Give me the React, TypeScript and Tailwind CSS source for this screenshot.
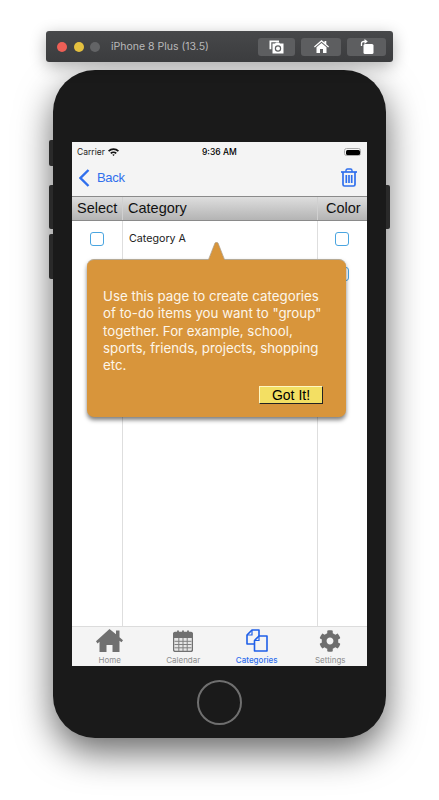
import React from 'react'
import { FaCog } from 'react-icons/fa'

const inter = "font-['Inter','Noto_Sans',sans-serif]"
const arial = "font-['Liberation_Sans',sans-serif]"

const Check: React.FC = () => (
  <div className="w-[14px] h-[14px] rounded-[3px] border-[1.5px] border-[#4aa5e0] bg-white" />
)

const TitleButton: React.FC<{ width: string; children: React.ReactNode }> = ({ width, children }) => (
  <div className={`${width} h-[18px] rounded-[3px] bg-[#5d5e60] flex items-center justify-center`}>{children}</div>
)

const TitleBar: React.FC = () => (
  <div className="ml-[46px] w-[347px] h-[31px] rounded-[3px] bg-gradient-to-b from-[#47484a] to-[#3b3c3e] shadow-[0_4px_16px_rgba(0,0,0,0.3)] flex items-center pl-[11px] pr-[7px] relative z-10">
    <div className="flex gap-[6.5px]">
      <div className="w-[10px] h-[10px] rounded-full bg-[#ee5f56]" />
      <div className="w-[10px] h-[10px] rounded-full bg-[#e4c03f]" />
      <div className="w-[10px] h-[10px] rounded-full bg-[#636466]" />
    </div>
    <span className={`${inter} ml-[11px] text-[10.500px] text-[#b9b9ba]`}>iPhone 8 Plus (13.5)</span>
    <div className="ml-auto flex gap-[6px]">
      <TitleButton width="w-[37px]">
        <svg width="15" height="14" viewBox="0 0 15 14">
          <path d="M0.500 0.500h9.500v1.800H2.300v7H0.500z" fill="#fff" />
          <path d="M3.500 3.500h2.500l1-1h3l1 1h3.500v10H3.500z" fill="#fff" />
          <circle cx="9" cy="8.500" r="2.600" fill="none" stroke="#5d5e60" strokeWidth="1.200" />
        </svg>
      </TitleButton>
      <TitleButton width="w-[40px]">
        <svg width="15" height="13" viewBox="0 0 15 13">
          <path d="M7.500 0 10.500 2.500V1h1.800v3.200L15 6.500l-.8.900-6.700-5.600L.8 7.400 0 6.500z" fill="#fff" />
          <path d="M2.500 7.200 7.500 3l5 4.200V13H9V9H6v4H2.500z" fill="#fff" />
        </svg>
      </TitleButton>
      <TitleButton width="w-[39px]">
        <svg width="14" height="15" viewBox="0 0 14 15">
          <rect x="3.500" y="5" width="10" height="10" rx="1.500" fill="#fff" />
          <path d="M1.500 7V4.500Q1.500 2.500 4 2.500h1" fill="none" stroke="#fff" strokeWidth="1.300" />
          <path d="M4.500 0 7.800 2.500 4.500 5z" fill="#fff" />
        </svg>
      </TitleButton>
    </div>
  </div>
)

const StatusBar: React.FC = () => (
  <div className={`${inter} h-[20px] shrink-0 flex items-center px-[5px] relative text-black`}>
    <span className="text-[8.500px] text-[#222]">Carrier</span>
    <svg className="ml-[3px]" width="11" height="8" viewBox="0 0 11 8">
      <path d="M0 2.600A7.800 7.800 0 0 1 11 2.600L9.800 3.800A6 6 0 0 0 1.200 3.800z" fill="#111" />
      <path d="M2.200 4.800A4.600 4.600 0 0 1 8.800 4.800L7.600 6A3 3 0 0 0 3.400 6z" fill="#111" />
      <path d="M4.300 6.800A1.700 1.700 0 0 1 6.700 6.800L5.500 8z" fill="#111" />
    </svg>
    <span className="absolute left-[130px] text-[8.500px] font-medium">9:36 AM</span>
    <div className="ml-auto mr-[1px] w-[17px] h-[8px] rounded-[2.500px] border border-[#aaa] p-[0.5px] flex">
      <div className="flex-1 bg-black rounded-[1.500px]" />
    </div>
  </div>
)

const NavBar: React.FC = () => (
  <div className="h-[34px] shrink-0 flex items-center pl-[7px] pr-[9px] pb-[3px]">
    <svg width="11" height="18" viewBox="0 0 11 18">
      <path d="M9.500 1 1.500 9l8 8" fill="none" stroke="#2f6fed" strokeWidth="2.400" />
    </svg>
    <span className={`${arial} ml-[7px] text-[13px] tracking-[-0.3px] text-[#2f6fed]`}>Back</span>
    <svg className="ml-auto" width="18" height="19" viewBox="0 0 18 19">
      <path d="M1 4h16" fill="none" stroke="#2f6fed" strokeWidth="1.700" />
      <path d="M6 4V2.500Q6 1 7.500 1h3Q12 1 12 2.500V4" fill="none" stroke="#2f6fed" strokeWidth="1.400" />
      <path d="M3 4v12.500Q3 18 4.500 18h9q1.500 0 1.500-1.500V4" fill="none" stroke="#2f6fed" strokeWidth="1.700" />
      <path d="M6.300 7v8M9 7v8M11.700 7v8" fill="none" stroke="#2f6fed" strokeWidth="1.700" />
    </svg>
  </div>
)

const TableHeader: React.FC = () => (
  <div className={`${arial} h-[25px] shrink-0 flex border-y border-[#8a8a8a] bg-gradient-to-b from-[#dedede] to-[#b4b4b4] text-[14.500px] text-[#111] leading-[23px]`}>
    <div className="w-[51px] pl-[5px] border-r border-[#d0d0d0]">Select</div>
    <div className="flex-1 pl-[5px] border-r border-[#d0d0d0]">Category</div>
    <div className="w-[49px] pl-[8px]">Color</div>
  </div>
)

const TableBody: React.FC = () => (
  <div className="flex-1 min-h-0 flex bg-white">
    <div className="w-[51px] flex flex-col border-r border-[#dedede]">
      <div className="h-[35px] flex items-center justify-center">
        <Check />
      </div>
    </div>
    <div className="flex-1 border-r border-[#dedede]">
      <div className={`${inter} h-[35px] flex items-center pl-[6px] pt-[1px] text-[10.700px] text-[#222]`}>Category A</div>
    </div>
    <div className="w-[49px] flex flex-col pr-[1px]">
      <div className="h-[35px] flex items-center justify-center">
        <Check />
      </div>
      <div className="h-[35px] flex items-center justify-center">
        <Check />
      </div>
    </div>
  </div>
)

const TabItem: React.FC<{ label: string; active?: boolean; children: React.ReactNode }> = ({ label, active, children }) => (
  <div className="flex-1 flex flex-col items-center">
    <div className="h-[24px] flex items-end justify-center">{children}</div>
    <span className={`${inter} mt-[3px] text-[8px] leading-[10px] ${active ? 'text-[#2f6fed] font-medium' : 'text-[#8e8e8e]'}`}>{label}</span>
  </div>
)

const TabBar: React.FC = () => (
  <div className="h-[40px] shrink-0 flex bg-[#f4f4f4] border-t border-[#dcdcdc] pt-[1px] pl-[1px]">
    <TabItem label="Home">
      <svg width="27" height="23" viewBox="0 0 27 23">
        <path d="M13.500 0 20 5.300V1.500h3.500v6.700l3.500 3-1.500 2.100-2-1.600V23h-7v-7h-6v7h-7V12.700l-2 1.700L0 12.200z" fill="#707070" />
      </svg>
    </TabItem>
    <TabItem label="Calendar">
      <svg width="20" height="22" viewBox="0 0 20 22">
        <rect x="0.500" y="2.500" width="19" height="19" rx="2" fill="#e6e6e6" stroke="#707070" strokeWidth="1.400" />
        <path d="M1 3h18v5H1z" fill="#707070" />
        <path d="M1.500 11.300h17M1.500 14.500h17M1.500 17.800h17M5.800 8v13M10 8v13M14.200 8v13" stroke="#808080" strokeWidth="1" />
        <path d="M5 0.500v4M10 0.500v4M15 0.500v4" stroke="#707070" strokeWidth="1.800" />
      </svg>
    </TabItem>
    <TabItem label="Categories" active>
      <svg width="22" height="23" viewBox="0 0 22 23">
        <path d="M6 1h7v14H1V6z" fill="none" stroke="#1f5fe8" strokeWidth="1.600" strokeLinejoin="round" />
        <path d="M6 1v5H1" fill="none" stroke="#1f5fe8" strokeWidth="1.200" />
        <path d="M13 7h8v15H8.500V11.500z" fill="#f4f4f4" stroke="#1f5fe8" strokeWidth="1.600" strokeLinejoin="round" />
        <path d="M13 7v4.500H8.500" fill="none" stroke="#1f5fe8" strokeWidth="1.200" />
      </svg>
    </TabItem>
    <TabItem label="Settings">
      <FaCog size={22} color="#6e6e6e" />
    </TabItem>
  </div>
)

const Callout: React.FC = () => (
  <div className="absolute left-[15px] top-[117px] w-[259px] h-[158px] rounded-[7px] bg-[#d8953b] shadow-[0_3px_4px_rgba(0,0,0,0.5)] border-t border-[#b5aa96] pl-[16px] pt-[28px]">
    <svg className="absolute left-[121px] top-[-18px]" width="17" height="18" viewBox="0 0 17 18">
      <path d="M0.500 18 7 1q1.500-1.500 3 0l6.500 17z" fill="#d8953b" />
      <path d="M0.500 17.500 7 1q1.500-1.500 3 0l6.500 16.500" fill="none" stroke="#a89a86" strokeWidth="0.700" />
    </svg>
    <p className={`${inter} text-[13.300px] leading-[17.300px] text-[#fdf6ea] whitespace-pre`}>
      {'Use this page to create categories\nof to-do items you want to "group"\ntogether. For example, school,\nsports, friends, projects, shopping\netc.'}
    </p>
    <div className={`${arial} absolute left-[172px] top-[126px] w-[64px] h-[18px] bg-[#f3df63] border border-t-[#fff7c0] border-l-[#fff7c0] border-r-[#222] border-b-[#222] flex items-center justify-center text-[14px] leading-none text-black`}>
      Got It!
    </div>
  </div>
)

const Screen: React.FC = () => (
  <div className="w-[295px] h-[524px] bg-[#f4f4f4] flex flex-col relative overflow-hidden">
    <StatusBar />
    <NavBar />
    <TableHeader />
    <TableBody />
    <TabBar />
    <Callout />
  </div>
)

const Phone: React.FC = () => (
  <div className="mt-[8px] ml-[53px] w-[333px] h-[668px] rounded-[42px] bg-[#1a1a1a] shadow-[0_14px_36px_rgba(0,0,0,0.6)] relative pl-[19px] pt-[72px]">
    <div className="absolute left-[-4px] top-[70px] w-[4px] h-[26px] rounded-l-[2px] bg-[#2a2a2a]" />
    <div className="absolute left-[-4px] top-[115px] w-[4px] h-[44px] rounded-l-[2px] bg-[#2a2a2a]" />
    <div className="absolute left-[-4px] top-[164px] w-[4px] h-[45px] rounded-l-[2px] bg-[#2a2a2a]" />
    <div className="absolute right-[-4px] top-[115px] w-[4px] h-[44px] rounded-r-[2px] bg-[#2a2a2a]" />
    <Screen />
    <div className="absolute left-[144px] top-[610px] w-[45px] h-[45px] rounded-full border-2 border-[#6f6f6f]" />
  </div>
)

export default function App() {
  return (
    <div className="w-[439px] h-[800px] bg-white overflow-hidden pt-[31px]">
      <TitleBar />
      <Phone />
    </div>
  )
}
